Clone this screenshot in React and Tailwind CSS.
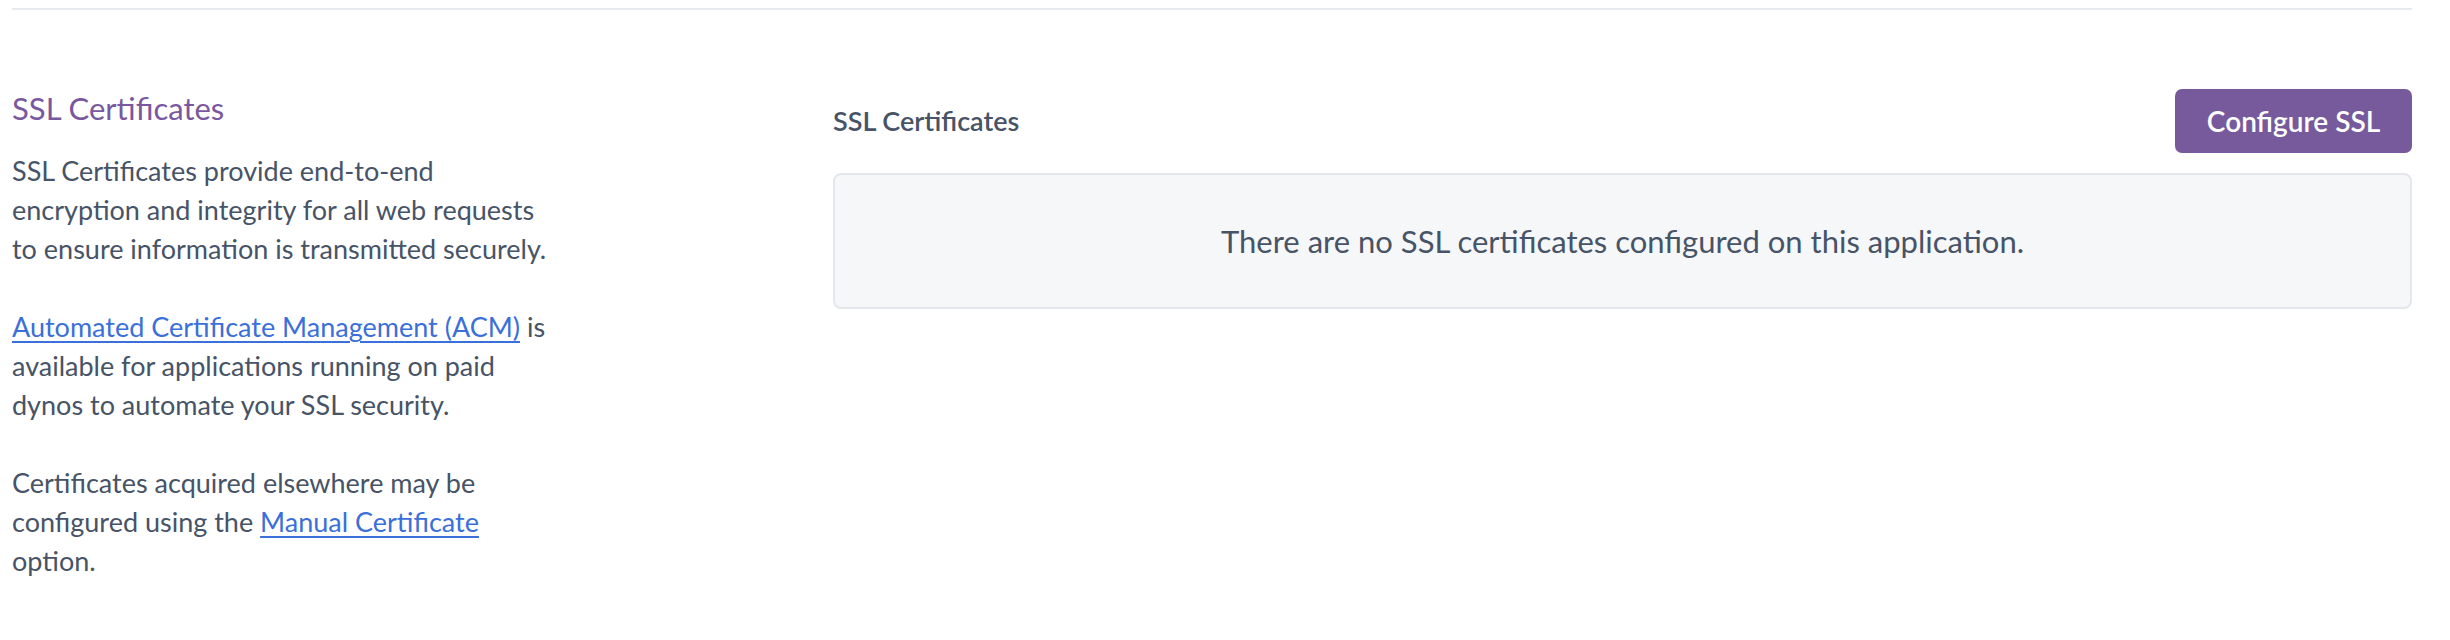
import { useState } from 'react'

function SslCertificates() {
  const [certificates] = useState([])

  return (
    <div className="h-[640px] w-full bg-white font-[Lato,_sans-serif]">
      <div className="pl-3 pr-[38px] pt-2">
        <div className="border-t-2 border-[#e6e9ee]" />

        <div className="mt-[76px] flex items-start">
          <div className="w-[821px] flex-none">
            <h2 className="text-[31px] leading-[45px] text-[#79589f]">SSL Certificates</h2>
            <div className="mt-5 w-[620px] text-[27px] leading-[39px] text-[#475366]">
              <p>
                SSL Certificates provide end-to-end
                <br />
                encryption and integrity for all web requests
                <br />
                to ensure information is transmitted securely.
              </p>
              <p className="mt-[39px]">
                <a href="#" className="text-[#3b6fd9] underline decoration-2 underline-offset-4">
                  Automated Certificate Management (ACM)
                </a>{' '}
                is
                <br />
                available for applications running on paid
                <br />
                dynos to automate your SSL security.
              </p>
              <p className="mt-[39px]">
                Certificates acquired elsewhere may be
                <br />
                configured using the{' '}
                <a href="#" className="text-[#3b6fd9] underline decoration-2 underline-offset-4">
                  Manual Certificate
                </a>
                <br />
                option.
              </p>
            </div>
          </div>

          <div className="min-w-0 flex-1 pt-[3px]">
            <div className="flex items-center justify-between">
              <h3 className="text-[27px] font-semibold text-[#475366]">SSL Certificates</h3>
              <button
                type="button"
                className="h-16 w-[237px] rounded-[7px] bg-[#765a9c] text-[28px] font-semibold text-white"
              >
                Configure SSL
              </button>
            </div>

            {certificates.length === 0 ? (
              <div className="mt-5 flex h-[136px] items-center justify-center rounded-lg border-2 border-[#e4e7eb] bg-[#f6f7f9]">
                <p className="text-[31px] text-[#475366]">
                  There are no SSL certificates configured on this application.
                </p>
              </div>
            ) : null}
          </div>
        </div>
      </div>
    </div>
  )
}

export default function App() {
  return <SslCertificates />
}
